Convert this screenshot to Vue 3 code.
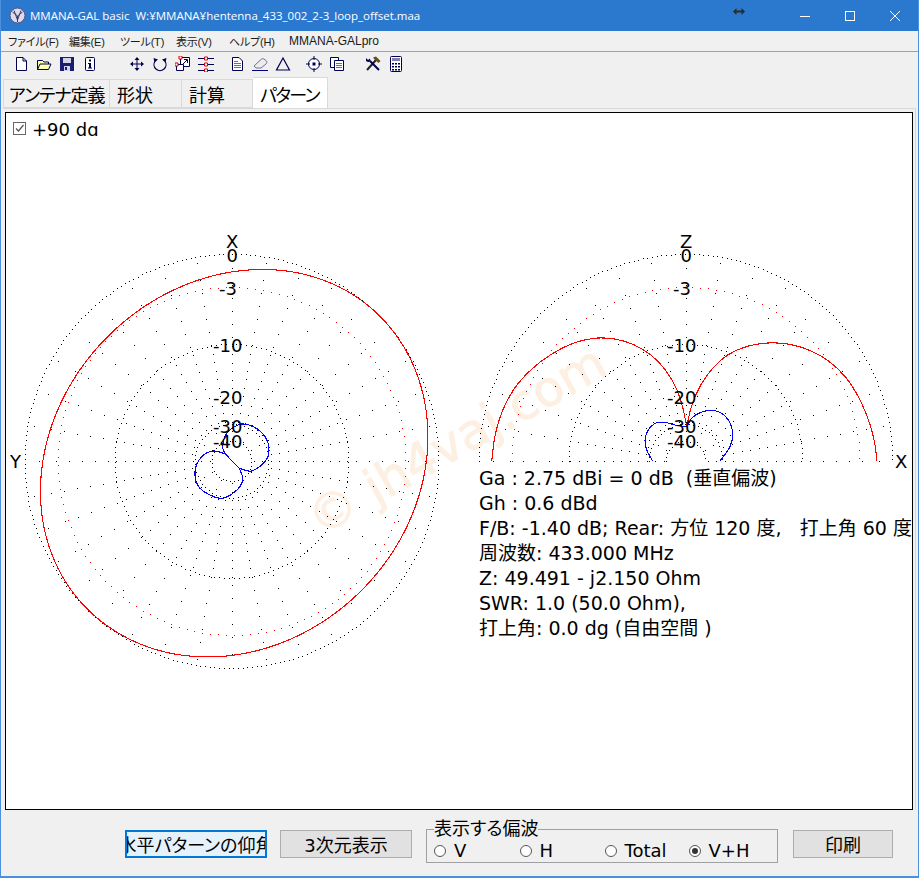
<template>
  <div class="window">
    <header class="titlebar">
      <svg class="app-icon" width="17" height="17" viewBox="0 0 17 17">
        <circle cx="8.5" cy="8.5" r="7.5" fill="#dcdaf0" stroke="#55557a" />
        <path d="M3.5 5 L8.5 9 L13.5 5 M5 3.5 L8.5 13 L12 3.5 M8.5 9 V15" fill="none" stroke="#3a3a5e" />
      </svg>
      <span class="title">MMANA-GAL basic&nbsp; W:¥MMANA¥hentenna_433_002_2-3_loop_offset.maa</span>
      <div class="win-buttons">
        <svg width="12" height="12" viewBox="0 0 12 12"><path d="M1 6.5H11" stroke="#fff" /></svg>
        <svg width="12" height="12" viewBox="0 0 12 12"><rect x="1.5" y="1.5" width="9" height="9" fill="none" stroke="#fff" /></svg>
        <svg width="12" height="12" viewBox="0 0 12 12"><path d="M1 1L11 11M11 1L1 11" stroke="#fff" /></svg>
      </div>
      <svg class="cursor" width="12" height="7" viewBox="0 0 12 7">
        <path d="M0 3.5L3.5 0V2.5H8.5V0L12 3.5L8.5 7V4.5H3.5V7Z" fill="#2b2b2b" />
      </svg>
    </header>

    <nav class="menubar">
      <span v-for="m in menus" :key="m.label" :style="{ width: m.width + 'px' }">{{ m.label }}</span>
      <span class="pro">MMANA-GALpro</span>
    </nav>

    <div class="toolbar">
      <!-- file group -->
      <svg class="ic" viewBox="0 0 16 16"><path d="M3.5 1.5H10L13.5 5V14.5H3.5ZM10 1.5V5H13.5" fill="#fff" stroke="#000050" /></svg>
      <svg class="ic" viewBox="0 0 16 16"><path d="M1.5 13.5V4.5H6.5L8 6H12.5V8M1.5 13.5L4 8H15L12.5 13.5Z" fill="#ffffa8" stroke="#000050" /></svg>
      <svg class="ic" viewBox="0 0 16 16"><path d="M1 1H15V15H1Z" fill="#1c1c70" /><path d="M4 2H12V7H4Z" fill="#d4d4ea" /><path d="M5 10H11V15H5Z" fill="#d4d4ea" /><path d="M6 11H8V14H6Z" fill="#1c1c70" /></svg>
      <svg class="ic" viewBox="0 0 16 16"><rect x="3.5" y="1.5" width="9" height="13" rx="1" fill="#fff" stroke="#000050" /><path d="M7 3.5H9V5.5H7ZM6 7H9V11.5H10V12.5H6V11.5H7V8H6Z" fill="#000050" /></svg>

      <!-- view group -->
      <svg class="ic gap-lg" viewBox="0 0 16 16"><path d="M8 1L10.5 4H5.5ZM8 15L5.5 12H10.5ZM1 8L4 5.5V10.5ZM15 8L12 10.5V5.5Z" fill="#000050" /><path d="M8 3V13M3 8H13" stroke="#000050" /></svg>
      <svg class="ic" viewBox="0 0 16 16"><path d="M3.2 5A6 6 0 1 0 12.8 5" fill="none" stroke="#000050" stroke-width="1.2" /><path d="M1.5 2L6 3.5L2.5 6.5ZM14.5 2L10 3.5L13.5 6.5Z" fill="#000050" /></svg>
      <svg class="ic" viewBox="0 0 16 16"><path d="M5.5 1.5H14.5V10.5H5.5Z" fill="#fff" stroke="#000050" /><path d="M1.5 8.5H8.5V14.5H1.5Z" fill="#fff" stroke="#000050" /><path d="M7 9L12 4M9 3.5H12.5V7" fill="none" stroke="#000050" /><path d="M4 0H7V3H4ZM0 7H3V10H0Z" fill="#fff" stroke="#e00000" /></svg>
      <svg class="ic" viewBox="0 0 16 16"><path d="M0 2.5H16M0 8.5H16M0 14.5H16" stroke="#000050" /><path d="M6.5 1H9.5V4H6.5ZM6.5 7H9.5V10H6.5ZM6.5 13H9.5V16H6.5Z" fill="#fff" stroke="#e00000" /></svg>

      <!-- sheet group -->
      <svg class="ic gap-sm" viewBox="0 0 16 16"><path d="M3.5 1.5H10L13.5 5V14.5H3.5Z" fill="#fff" stroke="#000050" /><path d="M5 5.5H9M5 7.5H12M5 9.5H12M5 11.5H12" stroke="#6a6aa0" /></svg>
      <svg class="ic" viewBox="0 0 16 16"><path d="M2 10L9 3.5C10 2.5 11 2.5 12 3L14.5 5C15 6 15 7 14 8L9 12H4Z" fill="#ececec" stroke="#70708c" /><path d="M0 14.5H16" stroke="#000080" /></svg>
      <svg class="ic" viewBox="0 0 16 16"><path d="M8 2L14.5 14H1.5Z" fill="none" stroke="#000050" stroke-width="1.2" /></svg>

      <svg class="ic gap-sm" viewBox="0 0 16 16"><circle cx="8" cy="8" r="5.5" fill="#fff" stroke="#000050" /><path d="M8 0V4M8 12V16M0 8H4M12 8H16" stroke="#000050" /><rect x="6.5" y="6.5" width="3" height="3" fill="#000050" /></svg>
      <svg class="ic" viewBox="0 0 16 16"><path d="M1.5 1.5H9.5V11.5H1.5Z" fill="#fff" stroke="#000050" /><path d="M5.5 4.5H14.5V14.5H5.5Z" fill="#fff" stroke="#000050" /><path d="M7 7.5H13M7 9.5H13M7 11.5H13" stroke="#6a6aa0" /></svg>

      <!-- tools -->
      <svg class="ic gap-md" viewBox="0 0 16 16"><path d="M2 14L11 4" stroke="#222" stroke-width="2" /><path d="M8 1.5L11 0.5L15.5 5L13.5 7L9.5 3.5Z" fill="#6b4a1e" /><path d="M14 14L5 5" stroke="#000050" stroke-width="2" /><path d="M1 2L3 4L5 2.5L5.5 5.5L3 6L1 5Z" fill="#000050" /></svg>
      <svg class="ic" viewBox="0 0 16 16"><rect x="2.5" y="0.5" width="11" height="15" rx="1" fill="#fff" stroke="#000050" /><path d="M4 2H12V5H4Z" fill="#8080b0" /><path d="M4 7H6V8.5H4ZM7 7H9V8.5H7ZM10 7H12V8.5H10ZM4 10H6V11.5H4ZM7 10H9V11.5H7ZM10 10H12V11.5H10ZM4 13H6V14.5H4ZM7 13H9V14.5H7ZM10 13H12V14.5H10Z" fill="#000050" /></svg>
    </div>

    <div class="tabs">
      <div
        v-for="(t, i) in tabs"
        :key="t.label"
        class="tab"
        :class="[t.cls, { active: i === 3 }]"
        :style="{ width: t.width + 'px' }"
      >{{ t.label }}</div>
    </div>

    <main class="page">
      <div class="canvas">
        <svg class="plot" width="906" height="696" viewBox="6 113 906 696">
          <text class="watermark" transform="translate(320 537) rotate(-29.5)">© jh4vaj.com</text>

          <path :d="blackDots" fill="#000" shape-rendering="crispEdges" />
          <path :d="redDots" fill="#f00" shape-rendering="crispEdges" />

          <path v-for="(d, i) in redCurves" :key="'r' + i" :d="d" class="curve" stroke="#f00" />
          <path v-for="(d, i) in blueCurves" :key="'b' + i" :d="d" class="curve" stroke="#00f" />

          <g v-for="offset in [0, 454]" :key="offset">
            <text v-for="l in scale" :key="l.t" class="axis" :x="l.x + offset" :y="l.y">{{ l.t }}</text>
          </g>
          <text class="axis" x="226" y="247.5">X</text>
          <text class="axis" x="10" y="468">Y</text>
          <text class="axis" x="680" y="247.5">Z</text>
          <text class="axis" x="895" y="468">X</text>
        </svg>

        <label class="check">
          <span class="check-box">
            <svg width="11" height="11" viewBox="0 0 11 11"><path d="M2 5.5L4.5 8L9.5 2" fill="none" stroke="#555" stroke-width="1.3" /></svg>
          </span>
          +90 dg
        </label>

        <div class="readout">
          <div v-for="line in readout" :key="line">{{ line }}</div>
        </div>
      </div>
    </main>

    <footer class="bottom">
      <button class="btn focus">水平パターンの仰角</button>
      <button class="btn three-d">3次元表示</button>
      <fieldset class="polar-group">
        <legend>表示する偏波</legend>
        <div v-for="r in radios" :key="r" class="radio">
          <span class="dot" :class="{ on: r === 'V+H' }"></span>{{ r }}
        </div>
      </fieldset>
      <button class="btn print">印刷</button>
    </footer>
  </div>
</template>

<script setup>
const menus = [
  { label: 'ファイル(F)', width: 45 },
  { label: '編集(E)', width: 35 },
  { label: 'ツール(T)', width: 40 },
  { label: '表示(V)', width: 37 },
  { label: 'ヘルプ(H)', width: 44 }
]

const tabs = [
  { label: 'アンテナ定義', width: 107, cls: 'tight' },
  { label: '形状', width: 72 },
  { label: '計算', width: 71 },
  { label: 'パターン', width: 75, cls: 'tighter' }
]

const radios = ['V', 'H', 'Total', 'V+H']

const readout = [
  'Ga : 2.75 dBi = 0 dB  (垂直偏波)',
  'Gh : 0.6 dBd',
  'F/B: -1.40 dB; Rear: 方位 120 度,   打上角 60 度',
  '周波数: 433.000 MHz',
  'Z: 49.491 - j2.150 Ohm',
  'SWR: 1.0 (50.0 Ohm),',
  '打上角: 0.0 dg (自由空間 )'
]

const scale = [
  { t: '0', x: 226.5, y: 262 },
  { t: '-3', x: 219, y: 295 },
  { t: '-10', x: 213, y: 352 },
  { t: '-20', x: 213, y: 404 },
  { t: '-30', x: 213, y: 433 },
  { t: '-40', x: 213, y: 448 }
]

const LEFT = { x: 232, y: 461.5 }
const RIGHT = { x: 686, y: 461.5 }

// angle is clockwise from straight up
const polar = (c, r, deg) => {
  const a = (deg * Math.PI) / 180
  return [c.x + r * Math.sin(a), c.y - r * Math.cos(a)]
}

const pixel = ([x, y]) => `M${Math.floor(x)} ${Math.floor(y)}h1v1h-1z`

const ring = (c, r, spacing, from, to) => {
  const stepDeg = (spacing / r) * (180 / Math.PI)
  let d = ''
  for (let a = from; a <= to; a += stepDeg) d += pixel(polar(c, r, a))
  return d
}

// dotted GDI lines step along the longer axis, so the radial gap grows towards the diagonals
const spoke = (c, deg) => {
  const a = (deg * Math.PI) / 180
  const stretch = 1 / Math.max(Math.abs(Math.sin(a)), Math.abs(Math.cos(a)))
  let d = ''
  let r = deg % 30 === 0 ? 22 : 40
  while (r < 204) {
    d += pixel(polar(c, r, deg))
    r += (r < 117 ? 8.5 : r < 174 ? 13 : 17) * stretch
  }
  return d
}

const spokes = (c, from, to) => {
  let d = ''
  for (let a = from; a <= to; a += 10) d += spoke(c, a)
  return d
}

const plotDots = (c, from, to) =>
  ring(c, 207, 4.7, from, to) +
  ring(c, 117, 5, from, to) +
  ring(c, 37, 4.4, from, to) +
  ring(c, 20, 4, from, to) +
  spokes(c, from, to)

const blackDots = plotDots(LEFT, 0, 359) + plotDots(RIGHT, -90, 90)
const redDots = ring(LEFT, 174, 8, 0, 359) + ring(RIGHT, 174, 8, -90, 90)

const smooth = (pts) => {
  let d = `M${pts[0][0]} ${pts[0][1]}`
  for (let i = 0; i < pts.length - 1; i++) {
    const p0 = pts[i - 1] || pts[i]
    const p1 = pts[i]
    const p2 = pts[i + 1]
    const p3 = pts[i + 2] || p2
    const c1 = [p1[0] + (p2[0] - p0[0]) / 6, p1[1] + (p2[1] - p0[1]) / 6]
    const c2 = [p2[0] - (p3[0] - p1[0]) / 6, p2[1] - (p3[1] - p1[1]) / 6]
    d += `C${c1[0]} ${c1[1]} ${c2[0]} ${c2[1]} ${p2[0]} ${p2[1]}`
  }
  return d
}

// evens out an open traced line, ends stay put
const relax = (pts) =>
  pts.map((p, i) => {
    if (i === 0 || i === pts.length - 1) return p
    return [
      (pts[i - 1][0] + 2 * p[0] + pts[i + 1][0]) / 4,
      (pts[i - 1][1] + 2 * p[1] + pts[i + 1][1]) / 4
    ]
  })

// the azimuth loop is close to a leaning ellipse: long axis NE-SW, flatter on the NW side
const azimuthLoop = () => {
  const cx = 233.5
  const cy = 462.5
  const lean = Math.PI / 4
  const out = []
  for (let deg = 0; deg <= 360; deg += 4) {
    const t = (deg * Math.PI) / 180
    const along = 207 * Math.cos(t)
    const across = (Math.sin(t) > 0 ? 178 : 181) * Math.sin(t)
    // across > 0 points NW in screen terms
    out.push([
      cx + along * Math.sin(lean) - across * Math.cos(lean),
      cy - along * Math.cos(lean) - across * Math.sin(lean)
    ])
  }
  return out
}

const elevRedL = [
  [491.7, 461], [493.3, 436.7], [501.7, 410], [513.3, 386.7], [530, 370], [550, 353.3],
  [573.3, 341.7], [593.3, 337.3], [613.3, 337.3], [633.3, 343.3], [651.7, 353.3],
  [666.7, 370], [676.7, 386.7], [683.3, 406.7], [686.7, 426.7]
]
const elevRedR = [
  [686.7, 426.7], [690, 406.7], [700, 383.3], [713.3, 366.7], [726.7, 353.3], [746.7, 345],
  [770, 341.7], [790, 343.3], [810, 349.3], [830, 360], [846.7, 376.7], [860, 396.7],
  [871.7, 426.7], [876, 446.7], [876.7, 461]
]
const redCurves = [azimuthLoop(), relax(elevRedL), relax(elevRedR)].map(smooth)

const azBlueA = [
  [239.3, 468.3], [251.7, 471], [265, 461.7], [269, 450], [265, 436.7], [253.3, 426.7],
  [240, 424.3], [226.7, 433.3], [222.7, 446.7], [225.3, 454]
]
const azBlueB = [
  [239.3, 468.3], [242.7, 480], [235, 491.7], [220, 498.3], [200, 488.3], [195, 471.7],
  [201.7, 456.7], [213.3, 451], [225.3, 454]
]
const azBlueLink = [[225.3, 454], [239.3, 468.3]]
const elevBlueL = [
  [652.7, 461], [646.7, 450], [645, 440], [648.3, 430], [656.7, 422.7], [666.7, 422.7],
  [675, 425], [686.7, 426.7]
]
const elevBlueR = [
  [686.7, 426.7], [693.3, 416.7], [706.7, 410.7], [718.3, 411.7], [728.3, 420],
  [732.7, 433.3], [730, 446.7], [720, 461]
]
const blueCurves = [azBlueA, azBlueB, azBlueLink, elevBlueL, elevBlueR].map(smooth)
</script>

<style>
html,
body {
  margin: 0;
  background: #f0f0f0;
}
</style>

<style scoped>
.window {
  width: 919px;
  height: 878px;
  box-sizing: border-box;
  display: flex;
  flex-direction: column;
  overflow: hidden;
  background: #f0f0f0;
  border-left: 1px solid #4a90dc;
  border-right: 1px solid #4a90dc;
  border-bottom: 2px solid #4a90dc;
  font-family: "DejaVu Sans", "Noto Sans CJK JP", sans-serif;
  color: #000;
}

.titlebar {
  position: relative;
  flex: none;
  height: 31px;
  display: flex;
  align-items: center;
  background: #2b79cf;
  color: #fff;
  padding-left: 8px;
}

.app-icon {
  margin-right: 4px;
}

.title {
  font-family: "Open Sans", sans-serif;
  font-size: 11.5px;
  white-space: pre;
}

.win-buttons {
  margin-left: auto;
  display: flex;
  gap: 33px;
  padding-right: 17px;
}

.win-buttons svg {
  display: block;
}

.cursor {
  position: absolute;
  left: 732px;
  top: 8px;
}

.menubar {
  flex: none;
  height: 20px;
  display: flex;
  align-items: center;
  gap: 16px;
  padding-left: 7px;
  border-bottom: 1px solid #a0a0a0;
  font-family: "Liberation Sans", "Noto Sans CJK JP", sans-serif;
  font-size: 11px;
  letter-spacing: -0.2px;
  font-feature-settings: "palt";
  color: #1a1a1a;
  white-space: nowrap;
}

.menubar .pro {
  font-size: 12px;
  letter-spacing: 0;
}

.toolbar {
  flex: none;
  height: 25px;
  box-sizing: border-box;
  padding: 0 0 2px 12px;
  display: flex;
  align-items: center;
}

.ic {
  width: 16px;
  height: 16px;
  margin-right: 7px;
  flex: none;
}

.gap-lg {
  margin-left: 24px;
}

.gap-md {
  margin-left: 13px;
}

.gap-sm {
  margin-left: 8px;
}

.tabs {
  flex: none;
  height: 31px;
  display: flex;
  align-items: flex-end;
  padding-left: 2px;
  font-size: 18px;
  font-feature-settings: "palt";
}

.tab {
  box-sizing: border-box;
  height: 29px;
  padding-left: 7px;
  display: flex;
  align-items: center;
  border: 1px solid #d9d9d9;
  border-left: 0;
  white-space: nowrap;
}

.tab:first-child {
  padding-left: 5px;
  border-left: 1px solid #d9d9d9;
}

.tab.tight {
  letter-spacing: -1px;
}

.tab.tighter {
  letter-spacing: -1.7px;
}

.tab.active {
  height: 32px;
  background: #fff;
  border-bottom: 0;
  margin-bottom: -1px;
}

.page {
  flex: none;
  height: 702px;
  box-sizing: border-box;
  margin: 0 2px 0 2px;
  padding: 3px 2px 0 2px;
  border-top: 1px solid #d9d9d9;
  border-right: 1px solid #d9d9d9;
}

.canvas {
  position: relative;
  box-sizing: border-box;
  width: 908px;
  height: 698px;
  border: 1px solid #000;
  background: #fff;
  overflow: hidden;
}

.plot {
  display: block;
}

.curve {
  fill: none;
  stroke-width: 1.1;
  shape-rendering: crispEdges;
}

.axis {
  font-family: "DejaVu Sans", sans-serif;
  font-size: 18px;
  fill: #000;
}

.watermark {
  font-family: "DejaVu Sans", sans-serif;
  font-size: 49px;
  fill: #fdf0e3;
  stroke: #fdf0e3;
  stroke-width: 1;
}

.check {
  position: absolute;
  left: 7px;
  top: 6px;
  height: 17px;
  display: flex;
  align-items: flex-start;
  gap: 6px;
  overflow: hidden;
  font-size: 18px;
  line-height: 22px;
}

.check-box {
  box-sizing: border-box;
  width: 13px;
  height: 13px;
  margin-top: 3px;
  border: 1px solid #666;
  background: #fff;
  display: flex;
  align-items: center;
  justify-content: center;
}

.readout {
  position: absolute;
  left: 473px;
  top: 353px;
  font-size: 19px;
  line-height: 25px;
  white-space: pre;
}

.bottom {
  flex: 1;
  display: flex;
  align-items: flex-start;
  padding-left: 124px;
  font-size: 18px;
  font-feature-settings: "palt";
}

.btn {
  box-sizing: border-box;
  height: 28px;
  margin-top: 20px;
  padding: 0;
  display: flex;
  align-items: center;
  justify-content: center;
  overflow: hidden;
  white-space: nowrap;
  background: #e1e1e1;
  border: 1px solid #adadad;
  font: inherit;
  color: #000;
}

.focus {
  width: 142px;
  background: #e5f1fb;
  border: 2px solid #0078d7;
}

.three-d {
  width: 132px;
  margin-left: 13px;
}

.print {
  width: 100px;
  margin-left: 15px;
}

.polar-group {
  box-sizing: border-box;
  width: 352px;
  height: 44px;
  margin: 9px 0 0 14px;
  padding: 0 0 0 7px;
  border: 1px solid #a0a0a0;
  display: grid;
  grid-template-columns: 85.5px 85px 84px auto;
  align-items: center;
  line-height: 22px;
}

.polar-group legend {
  margin-left: 0;
  padding: 0;
  line-height: 20px;
}

.radio {
  display: flex;
  align-items: center;
  gap: 8px;
}

.dot {
  box-sizing: border-box;
  width: 12px;
  height: 12px;
  border: 1px solid #555;
  border-radius: 50%;
  background: #fff;
  position: relative;
}

.dot.on::after {
  content: "";
  position: absolute;
  left: 2px;
  top: 2px;
  width: 6px;
  height: 6px;
  border-radius: 50%;
  background: #333;
}
</style>
